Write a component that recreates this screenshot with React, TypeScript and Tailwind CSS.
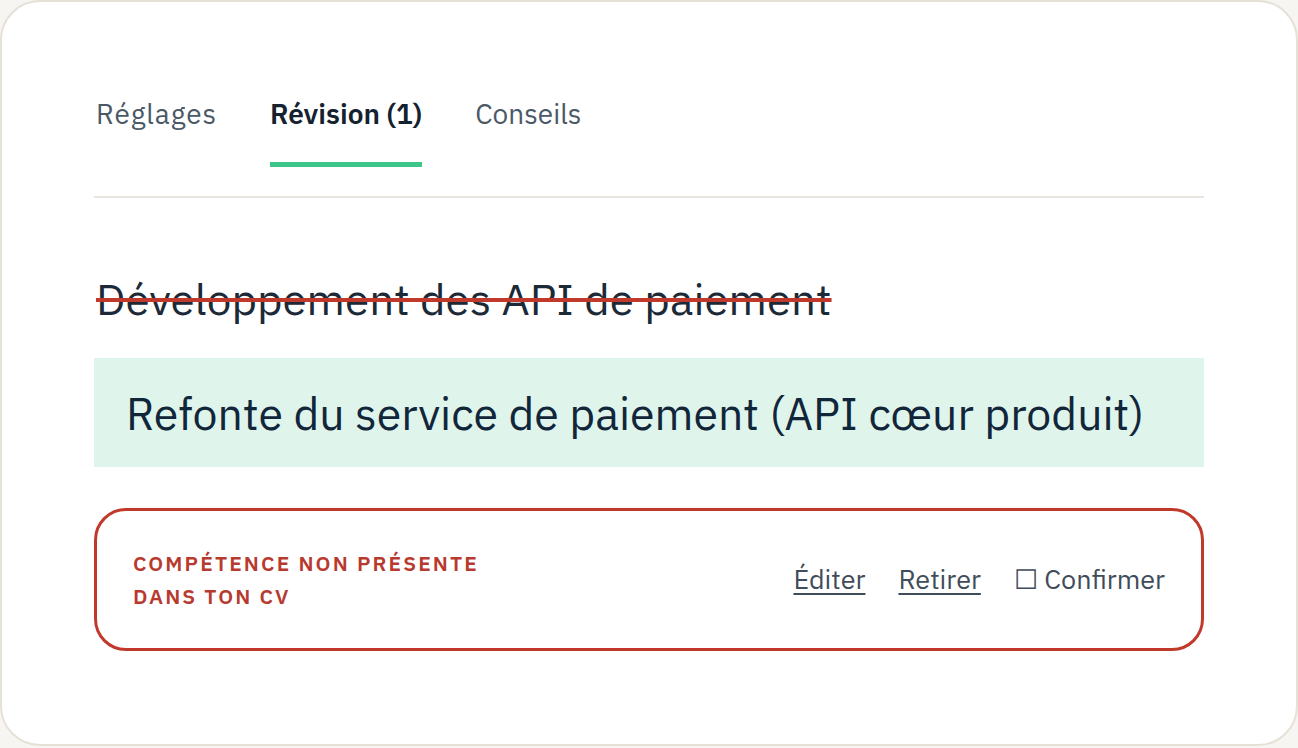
import * as React from "react";

const font = { fontFamily: '"IBM Plex Sans", Roboto, "Noto Sans", sans-serif' };

function Tab({ label, active, wide }: { label: string; active?: boolean; wide?: boolean }) {
    let cls = "text-[28px] leading-[32px] text-[#4b5966]";
    if (active) cls = "text-[28px] leading-[32px] font-semibold text-[#14212e]";
    if (wide) cls += " tracking-[0.9px]";
    return (
        <div className="flex flex-col items-stretch">
            <span className={cls}>{label}</span>
            <div className={active ? "mt-[32px] h-[5px] bg-[#3cc68a]" : "mt-[32px] h-[5px]"} />
        </div>
    );
}

export default function App() {
    return (
        <div className="w-[1298px] h-[748px] bg-[#f6f5f1] overflow-hidden" style={font}>
            <div className="h-[746px] rounded-[40px] border-2 border-[#e6e1d6] bg-white px-[92px] pt-[96px]">
                <nav className="flex gap-[53px] pl-[2px]">
                    <Tab label="Réglages" wide />
                    <Tab label="Révision (1)" active />
                    <Tab label="Conseils" />
                </nav>
                <div className="mt-[29px] h-[2px] bg-[#e8e5de]" />

                <p className="mt-[75px] text-[44px] leading-[52px] text-[#1c2a38] pl-[2px]">
                    <span className="line-through decoration-[#c0392b] decoration-[4px]">Développement des API de paiement</span>
                </p>

                <div className="mt-[33px] h-[109px] bg-[#dff5ec] flex items-center px-[32px]">
                    <span className="text-[44.6px] leading-[52px] text-[#12263a]">Refonte du service de paiement (API cœur produit)</span>
                </div>

                <div className="mt-[41px] h-[143px] rounded-[32px] border-[3px] border-[#c0392b] flex items-center justify-between pl-[36px] pr-[36px]">
                    <p className="text-[21px] leading-[33px] font-semibold tracking-[0.1em] text-[#b83a2e] uppercase">
                        Compétence non présente<br />dans ton CV
                    </p>
                    <div className="flex items-center gap-[33px] text-[27px] text-[#3f4d5a]">
                        <span className="underline underline-offset-[4px] decoration-[1.5px]">Éditer</span>
                        <span className="underline underline-offset-[4px] decoration-[1.5px]">Retirer</span>
                        <span>☐ Confirmer</span>
                    </div>
                </div>
            </div>
        </div>
    );
}
